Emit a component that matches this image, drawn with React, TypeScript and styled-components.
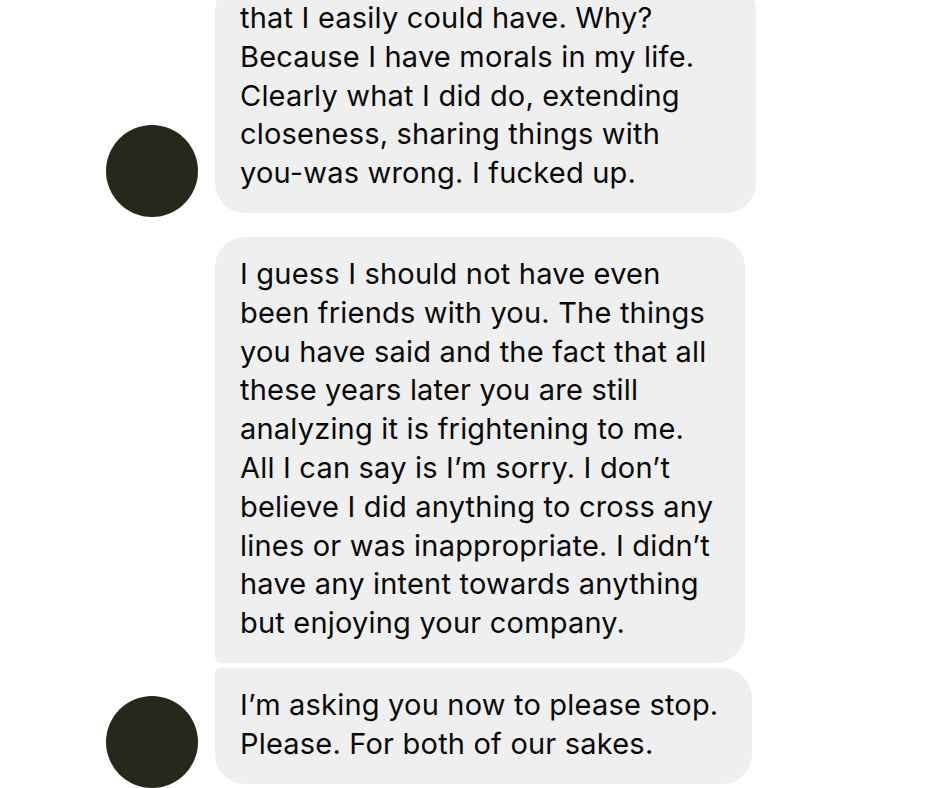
import styled, { createGlobalStyle } from "styled-components";

const GlobalStyle = createGlobalStyle`
  html, body {
    margin: 0;
    padding: 0;
    background: #ffffff;
  }
  body {
    font-family: Inter, "Noto Sans", "Liberation Sans", sans-serif;
    -webkit-font-smoothing: antialiased;
  }
`;

const Thread = styled.div`
  width: 940px;
  height: 788px;
  overflow: hidden;
  box-sizing: border-box;
  padding-left: 106px;
`;

// the view is scrolled, so the first bubble starts above the top edge
const Scroll = styled.div`
  margin-top: -19px;
  display: flex;
  flex-direction: column;
  gap: 24px;
`;

const Group = styled.div`
  display: grid;
  grid-template-columns: 92px auto;
  column-gap: 17px;
  align-items: end;
`;

const Avatar = styled.div`
  width: 92px;
  height: 92px;
  border-radius: 50%;
  background: #27281c;
  margin-bottom: -4px;
`;

const Bubbles = styled.div`
  display: flex;
  flex-direction: column;
  gap: 5px;
`;

const Bubble = styled.div<{ $w: number; $top: "big" | "small"; $bottom: "big" | "small" }>`
  box-sizing: border-box;
  width: ${(p) => p.$w}px;
  background: #efefef;
  color: #0a0a0a;
  padding: 18px 20px 20px 25px;
  font-size: 29px;
  line-height: 38.8px;
  letter-spacing: 0.2px;
  border-radius: ${(p) => (p.$top === "big" ? 30 : 6)}px 30px 30px
    ${(p) => (p.$bottom === "big" ? 30 : 6)}px;
`;

const Line = styled.div`
  white-space: nowrap;
`;

interface Msg {
  w: number;
  top: "big" | "small";
  bottom: "big" | "small";
  lines: string[];
}

const groups: Msg[][] = [
  [
    {
      w: 541,
      top: "big",
      bottom: "big",
      lines: [
        "that I easily could have. Why?",
        "Because I have morals in my life.",
        "Clearly what I did do, extending",
        "closeness, sharing things with",
        "you-was wrong. I fucked up.",
      ],
    },
  ],
  [
    {
      w: 530,
      top: "big",
      bottom: "small",
      lines: [
        "I guess I should not have even",
        "been friends with you. The things",
        "you have said and the fact that all",
        "these years later you are still",
        "analyzing it is frightening to me.",
        "All I can say is I\u2019m sorry. I don\u2019t",
        "believe I did anything to cross any",
        "lines or was inappropriate. I didn\u2019t",
        "have any intent towards anything",
        "but enjoying your company.",
      ],
    },
    {
      w: 537,
      top: "small",
      bottom: "big",
      lines: ["I\u2019m asking you now to please stop.", "Please. For both of our sakes."],
    },
  ],
];

export default function App() {
  return (
    <>
      <GlobalStyle />
      <Thread>
        <Scroll>
          {groups.map((g, i) => (
            <Group key={i}>
              <Avatar />
              <Bubbles>
                {g.map((m, j) => (
                  <Bubble key={j} $w={m.w} $top={m.top} $bottom={m.bottom}>
                    {m.lines.map((l, k) => (
                      <Line key={k}>{l}</Line>
                    ))}
                  </Bubble>
                ))}
              </Bubbles>
            </Group>
          ))}
        </Scroll>
      </Thread>
    </>
  );
}
